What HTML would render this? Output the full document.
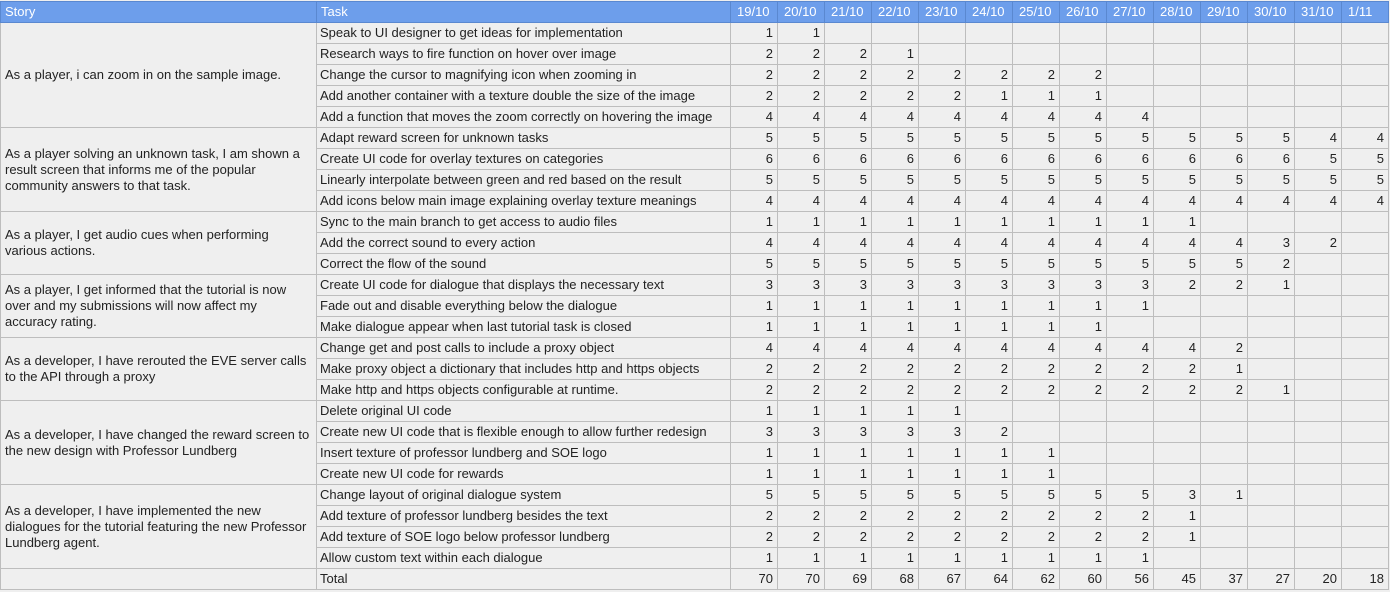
<!DOCTYPE html>
<html><head><meta charset="utf-8">
<style>
html,body{margin:0;padding:0;background:#efefef;width:1390px;height:592px;overflow:hidden}
table{border-collapse:collapse;table-layout:fixed;font-family:"Liberation Sans",Arial,sans-serif;font-size:13px;color:#222;position:absolute;left:0;top:1px}
td,th{border:1px solid #bdbdbd;height:20px;padding:0 4px 0 3px;white-space:nowrap;overflow:hidden;line-height:20px}
th{background:#6d9eeb;color:#fff;font-weight:normal;text-align:left;border-color:#5a88d0;padding-left:4px}
th.d{padding-left:6px}
td.n{text-align:right}
td.s{white-space:normal;line-height:16px;vertical-align:middle;padding-left:4px}
</style></head><body>
<table>
<colgroup><col style="width:316px"><col style="width:414px"><col span="14" style="width:47px"></colgroup>
<tr><th>Story</th><th>Task</th><th class="d">19/10</th><th class="d">20/10</th><th class="d">21/10</th><th class="d">22/10</th><th class="d">23/10</th><th class="d">24/10</th><th class="d">25/10</th><th class="d">26/10</th><th class="d">27/10</th><th class="d">28/10</th><th class="d">29/10</th><th class="d">30/10</th><th class="d">31/10</th><th class="d">1/11</th></tr>
<tr><td class="s" rowspan="5">As a player, i can zoom in on the sample image.</td><td>Speak to UI designer to get ideas for implementation</td><td class="n">1</td><td class="n">1</td><td></td><td></td><td></td><td></td><td></td><td></td><td></td><td></td><td></td><td></td><td></td><td></td></tr>
<tr><td>Research ways to fire function on hover over image</td><td class="n">2</td><td class="n">2</td><td class="n">2</td><td class="n">1</td><td></td><td></td><td></td><td></td><td></td><td></td><td></td><td></td><td></td><td></td></tr>
<tr><td>Change the cursor to magnifying icon when zooming in</td><td class="n">2</td><td class="n">2</td><td class="n">2</td><td class="n">2</td><td class="n">2</td><td class="n">2</td><td class="n">2</td><td class="n">2</td><td></td><td></td><td></td><td></td><td></td><td></td></tr>
<tr><td>Add another container with a texture double the size of the image</td><td class="n">2</td><td class="n">2</td><td class="n">2</td><td class="n">2</td><td class="n">2</td><td class="n">1</td><td class="n">1</td><td class="n">1</td><td></td><td></td><td></td><td></td><td></td><td></td></tr>
<tr><td>Add a function that moves the zoom correctly on hovering the image</td><td class="n">4</td><td class="n">4</td><td class="n">4</td><td class="n">4</td><td class="n">4</td><td class="n">4</td><td class="n">4</td><td class="n">4</td><td class="n">4</td><td></td><td></td><td></td><td></td><td></td></tr>
<tr><td class="s" rowspan="4">As a player solving an unknown task, I am shown a result screen that informs me of the popular community answers to that task.</td><td>Adapt reward screen for unknown tasks</td><td class="n">5</td><td class="n">5</td><td class="n">5</td><td class="n">5</td><td class="n">5</td><td class="n">5</td><td class="n">5</td><td class="n">5</td><td class="n">5</td><td class="n">5</td><td class="n">5</td><td class="n">5</td><td class="n">4</td><td class="n">4</td></tr>
<tr><td>Create UI code for overlay textures on categories</td><td class="n">6</td><td class="n">6</td><td class="n">6</td><td class="n">6</td><td class="n">6</td><td class="n">6</td><td class="n">6</td><td class="n">6</td><td class="n">6</td><td class="n">6</td><td class="n">6</td><td class="n">6</td><td class="n">5</td><td class="n">5</td></tr>
<tr><td>Linearly interpolate between green and red based on the result</td><td class="n">5</td><td class="n">5</td><td class="n">5</td><td class="n">5</td><td class="n">5</td><td class="n">5</td><td class="n">5</td><td class="n">5</td><td class="n">5</td><td class="n">5</td><td class="n">5</td><td class="n">5</td><td class="n">5</td><td class="n">5</td></tr>
<tr><td>Add icons below main image explaining overlay texture meanings</td><td class="n">4</td><td class="n">4</td><td class="n">4</td><td class="n">4</td><td class="n">4</td><td class="n">4</td><td class="n">4</td><td class="n">4</td><td class="n">4</td><td class="n">4</td><td class="n">4</td><td class="n">4</td><td class="n">4</td><td class="n">4</td></tr>
<tr><td class="s" rowspan="3">As a player, I get audio cues when performing various actions.</td><td>Sync to the main branch to get access to audio files</td><td class="n">1</td><td class="n">1</td><td class="n">1</td><td class="n">1</td><td class="n">1</td><td class="n">1</td><td class="n">1</td><td class="n">1</td><td class="n">1</td><td class="n">1</td><td></td><td></td><td></td><td></td></tr>
<tr><td>Add the correct sound to every action</td><td class="n">4</td><td class="n">4</td><td class="n">4</td><td class="n">4</td><td class="n">4</td><td class="n">4</td><td class="n">4</td><td class="n">4</td><td class="n">4</td><td class="n">4</td><td class="n">4</td><td class="n">3</td><td class="n">2</td><td></td></tr>
<tr><td>Correct the flow of the sound</td><td class="n">5</td><td class="n">5</td><td class="n">5</td><td class="n">5</td><td class="n">5</td><td class="n">5</td><td class="n">5</td><td class="n">5</td><td class="n">5</td><td class="n">5</td><td class="n">5</td><td class="n">2</td><td></td><td></td></tr>
<tr><td class="s" rowspan="3">As a player, I get informed that the tutorial is now over and my submissions will now affect my<br>accuracy rating.</td><td>Create UI code for dialogue that displays the necessary text</td><td class="n">3</td><td class="n">3</td><td class="n">3</td><td class="n">3</td><td class="n">3</td><td class="n">3</td><td class="n">3</td><td class="n">3</td><td class="n">3</td><td class="n">2</td><td class="n">2</td><td class="n">1</td><td></td><td></td></tr>
<tr><td>Fade out and disable everything below the dialogue</td><td class="n">1</td><td class="n">1</td><td class="n">1</td><td class="n">1</td><td class="n">1</td><td class="n">1</td><td class="n">1</td><td class="n">1</td><td class="n">1</td><td></td><td></td><td></td><td></td><td></td></tr>
<tr><td>Make dialogue appear when last tutorial task is closed</td><td class="n">1</td><td class="n">1</td><td class="n">1</td><td class="n">1</td><td class="n">1</td><td class="n">1</td><td class="n">1</td><td class="n">1</td><td></td><td></td><td></td><td></td><td></td><td></td></tr>
<tr><td class="s" rowspan="3">As a developer, I have rerouted the EVE server calls to the API through a proxy</td><td>Change get and post calls to include a proxy object</td><td class="n">4</td><td class="n">4</td><td class="n">4</td><td class="n">4</td><td class="n">4</td><td class="n">4</td><td class="n">4</td><td class="n">4</td><td class="n">4</td><td class="n">4</td><td class="n">2</td><td></td><td></td><td></td></tr>
<tr><td>Make proxy object a dictionary that includes http and https objects</td><td class="n">2</td><td class="n">2</td><td class="n">2</td><td class="n">2</td><td class="n">2</td><td class="n">2</td><td class="n">2</td><td class="n">2</td><td class="n">2</td><td class="n">2</td><td class="n">1</td><td></td><td></td><td></td></tr>
<tr><td>Make http and https objects configurable at runtime.</td><td class="n">2</td><td class="n">2</td><td class="n">2</td><td class="n">2</td><td class="n">2</td><td class="n">2</td><td class="n">2</td><td class="n">2</td><td class="n">2</td><td class="n">2</td><td class="n">2</td><td class="n">1</td><td></td><td></td></tr>
<tr><td class="s" rowspan="4">As a developer, I have changed the reward screen to the new design with Professor Lundberg</td><td>Delete original UI code</td><td class="n">1</td><td class="n">1</td><td class="n">1</td><td class="n">1</td><td class="n">1</td><td></td><td></td><td></td><td></td><td></td><td></td><td></td><td></td><td></td></tr>
<tr><td>Create new UI code that is flexible enough to allow further redesign</td><td class="n">3</td><td class="n">3</td><td class="n">3</td><td class="n">3</td><td class="n">3</td><td class="n">2</td><td></td><td></td><td></td><td></td><td></td><td></td><td></td><td></td></tr>
<tr><td>Insert texture of professor lundberg and SOE logo</td><td class="n">1</td><td class="n">1</td><td class="n">1</td><td class="n">1</td><td class="n">1</td><td class="n">1</td><td class="n">1</td><td></td><td></td><td></td><td></td><td></td><td></td><td></td></tr>
<tr><td>Create new UI code for rewards</td><td class="n">1</td><td class="n">1</td><td class="n">1</td><td class="n">1</td><td class="n">1</td><td class="n">1</td><td class="n">1</td><td></td><td></td><td></td><td></td><td></td><td></td><td></td></tr>
<tr><td class="s" rowspan="4">As a developer, I have implemented the new dialogues for the tutorial featuring the new Professor Lundberg agent.</td><td>Change layout of original dialogue system</td><td class="n">5</td><td class="n">5</td><td class="n">5</td><td class="n">5</td><td class="n">5</td><td class="n">5</td><td class="n">5</td><td class="n">5</td><td class="n">5</td><td class="n">3</td><td class="n">1</td><td></td><td></td><td></td></tr>
<tr><td>Add texture of professor lundberg besides the text</td><td class="n">2</td><td class="n">2</td><td class="n">2</td><td class="n">2</td><td class="n">2</td><td class="n">2</td><td class="n">2</td><td class="n">2</td><td class="n">2</td><td class="n">1</td><td></td><td></td><td></td><td></td></tr>
<tr><td>Add texture of SOE logo below professor lundberg</td><td class="n">2</td><td class="n">2</td><td class="n">2</td><td class="n">2</td><td class="n">2</td><td class="n">2</td><td class="n">2</td><td class="n">2</td><td class="n">2</td><td class="n">1</td><td></td><td></td><td></td><td></td></tr>
<tr><td>Allow custom text within each dialogue</td><td class="n">1</td><td class="n">1</td><td class="n">1</td><td class="n">1</td><td class="n">1</td><td class="n">1</td><td class="n">1</td><td class="n">1</td><td class="n">1</td><td></td><td></td><td></td><td></td><td></td></tr>
<tr><td></td><td>Total</td><td class="n">70</td><td class="n">70</td><td class="n">69</td><td class="n">68</td><td class="n">67</td><td class="n">64</td><td class="n">62</td><td class="n">60</td><td class="n">56</td><td class="n">45</td><td class="n">37</td><td class="n">27</td><td class="n">20</td><td class="n">18</td></tr>
</table>
</body></html>
